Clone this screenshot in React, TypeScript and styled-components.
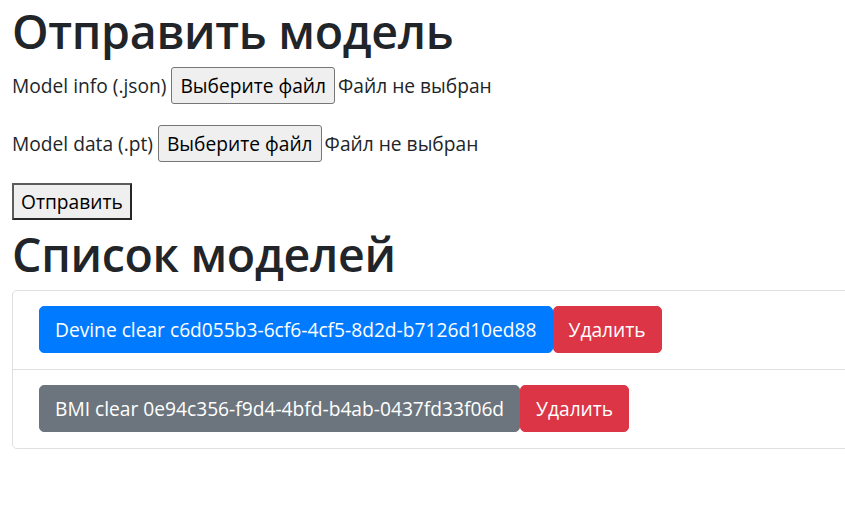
import React from "react";
import styled, {createGlobalStyle, css} from "styled-components";

const GlobalStyle = createGlobalStyle`
	html, body {
		margin: 0;
		padding: 0;
		background: #fff;
		overflow-x: hidden;
	}
	body {
		font-family: "Open Sans", "Noto Sans", sans-serif;
		font-size: 19.2px;
		color: #212529;
	}
`;

const Page = styled.main`
	padding: 0 0 0 12px;
`;

const Title = styled.h1<{$top?: number}>`
	margin: ${({$top}) => $top ?? 0}px 0 7px;
	padding-top: 2px;
	font-size: 46.5px;
	font-weight: 600;
	line-height: 58px;
	letter-spacing: -0.3px;
`;

const Form = styled.form`
	display: flex;
	flex-direction: column;
	align-items: flex-start;
	gap: 21px;
`;

const FileRow = styled.div`
	display: flex;
	align-items: center;
	height: 37px;
	white-space: nowrap;
`;

const FieldLabel = styled.label`
	margin-right: 5px;
`;

const BrowseButton = styled.button`
	height: 37px;
	padding: 0 8px;
	font: inherit;
	color: #000;
	background: #efefef;
	border: 1px solid #767676;
	border-radius: 3px;
`;

const FileStatus = styled.span`
	margin-left: 3px;
`;

const SubmitButton = styled.button`
	height: 37px;
	padding: 0 7px;
	font: inherit;
	color: #000;
	background: #efefef;
	border: 2px solid;
	border-color: #5c5c5c #262626 #262626 #5c5c5c;
	border-radius: 0;
`;

const ListGroup = styled.ul`
	width: 900px;
	margin: 0;
	padding: 0;
	list-style: none;
	border: 1px solid rgba(0, 0, 0, 0.125);
	border-radius: 5px;
`;

const ListItem = styled.li`
	display: flex;
	padding: 15px 25px 16px 26px;
	& + & {
		border-top: 1px solid rgba(0, 0, 0, 0.125);
	}
`;

type Variant = "primary" | "secondary" | "danger";

const colors: Record<Variant, string> = {
	primary: "#007bff",
	secondary: "#6c757d",
	danger: "#dc3545"
};

const Btn = styled.button<{$variant: Variant}>`
	height: 47px;
	padding: 0 15px;
	font: inherit;
	line-height: 30px;
	color: #fff;
	border-radius: 5px;
	white-space: nowrap;
	${({$variant}) => css`
		background: ${colors[$variant]};
		border: 1px solid ${colors[$variant]};
	`};
`;

const models = [
	{name: "Devine clear", id: "c6d055b3-6cf6-4cf5-8d2d-b7126d10ed88", variant: "primary" as Variant},
	{name: "BMI clear", id: "0e94c356-f9d4-4bfd-b4ab-0437fd33f06d", variant: "secondary" as Variant}
];

export default function App() {
	return (
		<>
			<GlobalStyle />
			<Page>
				<Title>Отправить модель</Title>
				<Form onSubmit={e => e.preventDefault()}>
					<FileRow>
						<FieldLabel>Model info (.json)</FieldLabel>
						<BrowseButton type="button">Выберите файл</BrowseButton>
						<FileStatus>Файл не выбран</FileStatus>
					</FileRow>
					<FileRow>
						<FieldLabel>Model data (.pt)</FieldLabel>
						<BrowseButton type="button">Выберите файл</BrowseButton>
						<FileStatus>Файл не выбран</FileStatus>
					</FileRow>
					<SubmitButton type="submit">Отправить</SubmitButton>
				</Form>
				<Title $top={3}>Список моделей</Title>
				<ListGroup>
					{models.map(m => (
						<ListItem key={m.id}>
							<Btn $variant={m.variant}>
								{m.name} {m.id}
							</Btn>
							<Btn $variant="danger">Удалить</Btn>
						</ListItem>
					))}
				</ListGroup>
			</Page>
		</>
	);
}
